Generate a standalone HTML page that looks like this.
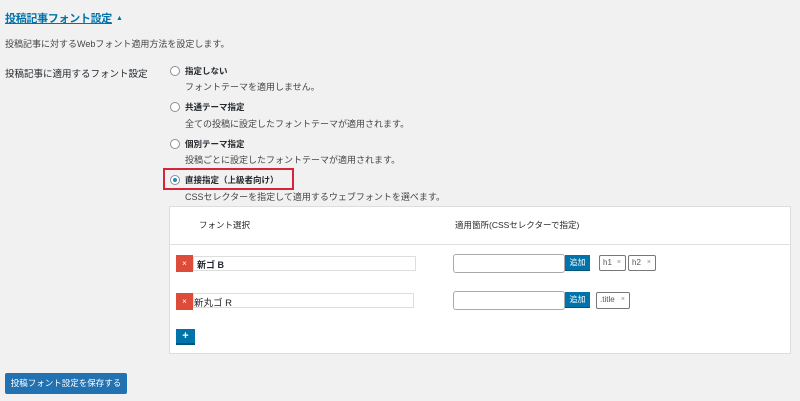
<!DOCTYPE html>
<html><head><meta charset="utf-8"><style>
*{box-sizing:border-box;margin:0;padding:0}
body{width:800px;height:401px;background:#f1f1f1;font-family:"Liberation Sans","Noto Sans CJK JP",sans-serif;color:#23282d;position:relative;overflow:hidden;font-size:9px}
.a{position:absolute;white-space:nowrap}
.radio{position:absolute;width:10px;height:10px;border:1px solid #8c8f94;border-radius:50%;background:#fff}
.b{font-weight:bold}
.inp{position:absolute;background:#fff;border:1px solid #ddd}
.btn{position:absolute;background:#0073aa;color:#fff;border-bottom:1px solid #00547a;font-size:8px;text-align:center}
.tag{position:absolute;border:1px solid #777;border-radius:2px;background:#fff;font-size:8px;color:#555;padding-left:3px;line-height:14px}
.tag i{position:absolute;right:4px;top:0;font-style:normal;color:#888;font-size:7px;line-height:14px}
.x{position:absolute;width:17px;height:17px;background:#dd4b39;color:#fff;font-size:8px;text-align:center;line-height:17px}
</style></head><body>
<div class="a" style="left:5px;top:10px;font-size:11px;color:#0073aa;text-decoration:underline;font-weight:bold;letter-spacing:-0.3px">投稿記事フォント設定</div>
<div class="a" style="left:116px;top:15px;font-size:7px;color:#0073aa">▲</div>
<div class="a" style="left:5px;top:37px;color:#444">投稿記事に対するWebフォント適用方法を設定します。</div>
<div class="a" style="left:5px;top:66px;font-size:9.5px;color:#23282d">投稿記事に適用するフォント設定</div>

<div class="radio" style="left:170px;top:66px"></div>
<div class="a b" style="left:185px;top:65px;font-size:8.5px">指定しない</div>
<div class="a" style="left:185px;top:80px;color:#444">フォントテーマを適用しません。</div>
<div class="radio" style="left:170px;top:102px"></div>
<div class="a b" style="left:185px;top:101px;font-size:8.5px">共通テーマ指定</div>
<div class="a" style="left:185px;top:117px;color:#444">全ての投稿に設定したフォントテーマが適用されます。</div>
<div class="radio" style="left:170px;top:139px"></div>
<div class="a b" style="left:185px;top:138px;font-size:8.5px">個別テーマ指定</div>
<div class="a" style="left:185px;top:153px;color:#444">投稿ごとに設定したフォントテーマが適用されます。</div>
<div style="position:absolute;left:163px;top:168px;width:131px;height:22px;border:2px solid #d6253a"></div>
<div class="radio" style="left:170px;top:175px"></div>
<div style="position:absolute;left:173px;top:178px;width:4px;height:4px;border-radius:50%;background:#1e8cbe"></div>
<div class="a b" style="left:185px;top:174px;font-size:8.5px">直接指定（上級者向け）</div>
<div class="a" style="left:185px;top:190px;color:#444">CSSセレクターを指定して適用するウェブフォントを選べます。</div>

<div style="position:absolute;left:169px;top:206px;width:622px;height:148px;background:#fff;border:1px solid #ddd"></div>
<div style="position:absolute;left:170px;top:244px;width:620px;height:1px;background:#e1e1e1"></div>
<div class="a" style="left:199px;top:219px;font-size:8.5px">フォント選択</div>
<div class="a" style="left:455px;top:219px;font-size:8.5px">適用箇所(CSSセレクターで指定)</div>

<div class="x" style="left:176px;top:255px">×</div>
<div class="inp" style="left:193px;top:256px;width:223px;height:15px"></div>
<div class="a b" style="left:197px;top:258px;font-size:9px">新ゴ B</div>
<div class="inp" style="left:453px;top:254px;width:112px;height:19px;border-color:#aaa;border-radius:3px"></div>
<div class="btn" style="left:565px;top:255px;width:25px;height:16px;line-height:15px">追加</div>
<div class="tag" style="left:599px;top:255px;width:27px;height:16px">h1<i>×</i></div>
<div class="tag" style="left:628px;top:255px;width:28px;height:16px">h2<i>×</i></div>

<div class="x" style="left:176px;top:293px">×</div>
<div class="inp" style="left:193px;top:293px;width:221px;height:15px"></div>
<div class="a" style="left:194px;top:295px;font-size:9.5px">新丸ゴ R</div>
<div class="inp" style="left:453px;top:291px;width:112px;height:19px;border-color:#aaa;border-radius:3px"></div>
<div class="btn" style="left:565px;top:292px;width:25px;height:16px;line-height:15px">追加</div>
<div class="tag" style="left:596px;top:292px;width:34px;height:17px">.title<i>×</i></div>

<div style="position:absolute;left:176px;top:329px;width:19px;height:16px;background:#0073aa;border-bottom:2px solid #00547a;color:#fff;font-weight:bold;font-size:11px;text-align:center;line-height:14px">+</div>

<div style="position:absolute;left:5px;top:373px;width:122px;height:21px;background:#2271b1;border-radius:2px;color:#fff;font-size:8.5px;text-align:center;line-height:21px">投稿フォント設定を保存する</div>
</body></html>
